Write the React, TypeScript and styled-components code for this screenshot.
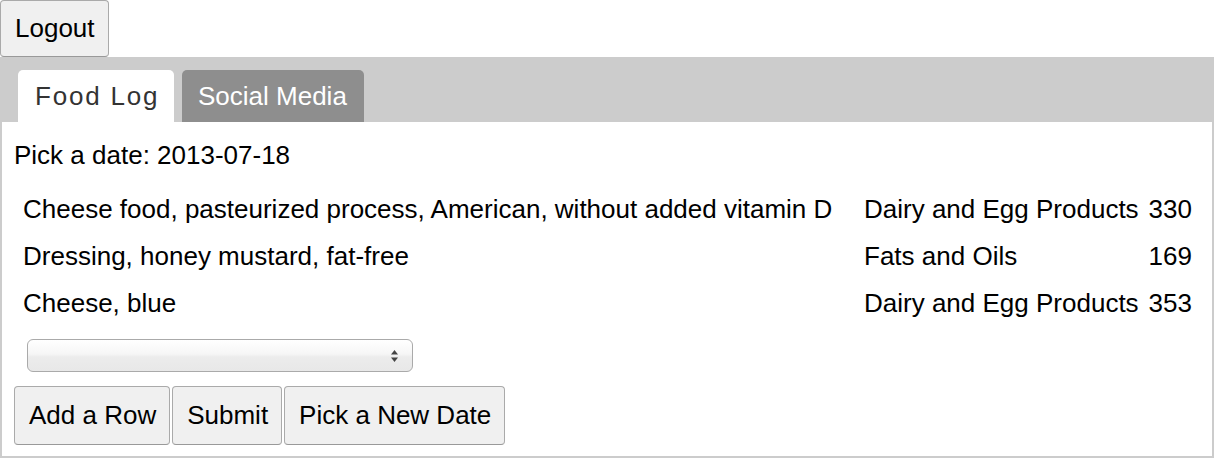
import * as React from 'react'
import { FC } from 'react'
import styled, { createGlobalStyle } from 'styled-components'

type FoodRow = {
    name: string
    group: string
    kcal: number
}

const rows: FoodRow[] = [
    { name: 'Cheese food, pasteurized process, American, without added vitamin D', group: 'Dairy and Egg Products', kcal: 330 },
    { name: 'Dressing, honey mustard, fat-free', group: 'Fats and Oils', kcal: 169 },
    { name: 'Cheese, blue', group: 'Dairy and Egg Products', kcal: 353 },
]

const App: FC = () => {
    return (
        <Page>
            <GlobalStyle />
            <Button>Logout</Button>
            <Tabs>
                <TabBar>
                    <Tab active width={156}>Food Log</Tab>
                    <Tab width={182}>Social Media</Tab>
                </TabBar>
                <Panel>
                    <DateLine>Pick a date: 2013-07-18</DateLine>
                    <FoodTable>
                        {rows.map(row => (
                            <React.Fragment key={row.name}>
                                <Cell>{row.name}</Cell>
                                <Cell>{row.group}</Cell>
                                <Cell numeric>{row.kcal}</Cell>
                            </React.Fragment>
                        ))}
                    </FoodTable>
                    <FoodSelect>
                        <Arrows>
                            <svg width="9" height="14" viewBox="0 0 9 14">
                                <path d="M4.5 1 L8 5.5 L1 5.5 Z" fill="#444" />
                                <path d="M4.5 13 L8 8.5 L1 8.5 Z" fill="#444" />
                            </svg>
                        </Arrows>
                    </FoodSelect>
                    <ButtonRow>
                        <Button>Add a Row</Button>
                        <Button>Submit</Button>
                        <Button>Pick a New Date</Button>
                    </ButtonRow>
                </Panel>
            </Tabs>
        </Page>
    )
}

const GlobalStyle = createGlobalStyle`
    body {
        margin: 0;
        background: #fff;
        font-family: "Liberation Sans", Arial, Helvetica, sans-serif;
        font-size: 26px;
        color: #000;
    }
`

const Page = styled.div`
    width: 1222px;
`

const Button = styled.button`
    height: 57px;
    padding: 0 13px 0 14px;
    border: 1px solid #aaa;
    border-bottom-color: #999;
    border-radius: 4px;
    background: #f0f0f0;
    font-family: "Liberation Sans", Arial, sans-serif;
    font-size: 26px;
    color: #000;
    display: block;
`

const Tabs = styled.div`
    width: 1214px;
`

const TabBar = styled.div`
    height: 65px;
    background: #cccccc;
    display: flex;
    align-items: flex-end;
    gap: 8px;
    padding-left: 18px;
    box-sizing: border-box;
`

const Tab = styled.div<{ active?: boolean; width: number }>`
    width: ${p => p.width}px;
    height: 52px;
    display: flex;
    align-items: center;
    box-sizing: border-box;
    border-radius: 5px 5px 0 0;
    padding-left: ${p => (p.active ? '17px' : '16px')};
    background: ${p => (p.active ? '#fff' : '#8e8e8e')};
    color: ${p => (p.active ? '#333' : '#fff')};
    letter-spacing: ${p => (p.active ? '1.8px' : '0')};
    white-space: nowrap;
    font-size: 26px;
`

const Panel = styled.div`
    border: 2px solid #cccccc;
    border-top: none;
    padding: 18px 0 11px 0;
`

const DateLine = styled.div`
    line-height: 30px;
    padding-left: 12px;
`

const FoodTable = styled.div`
    display: grid;
    grid-template-columns: 1fr auto auto;
    column-gap: 10px;
    padding: 0 20px 0 21px;
    margin-top: 16px;
`

const Cell = styled.div<{ numeric?: boolean }>`
    height: 47px;
    line-height: 47px;
    white-space: nowrap;
    text-align: ${p => (p.numeric ? 'right' : 'left')};
`

const FoodSelect = styled.div`
    width: 386px;
    height: 33px;
    margin: 12px 0 0 25px;
    box-sizing: border-box;
    border: 1px solid #aaa;
    border-radius: 6px;
    background: linear-gradient(#ffffff 0%, #f6f6f6 45%, #ececec 55%, #e8e8e8 100%);
    display: flex;
    align-items: center;
    justify-content: flex-end;
    padding-right: 13px;
`

const Arrows = styled.span`
    display: flex;
`

const ButtonRow = styled.div`
    display: flex;
    gap: 2px;
    margin-top: 14px;
    padding-left: 12px;

    button {
        height: 59px;
    }
`

export default App
